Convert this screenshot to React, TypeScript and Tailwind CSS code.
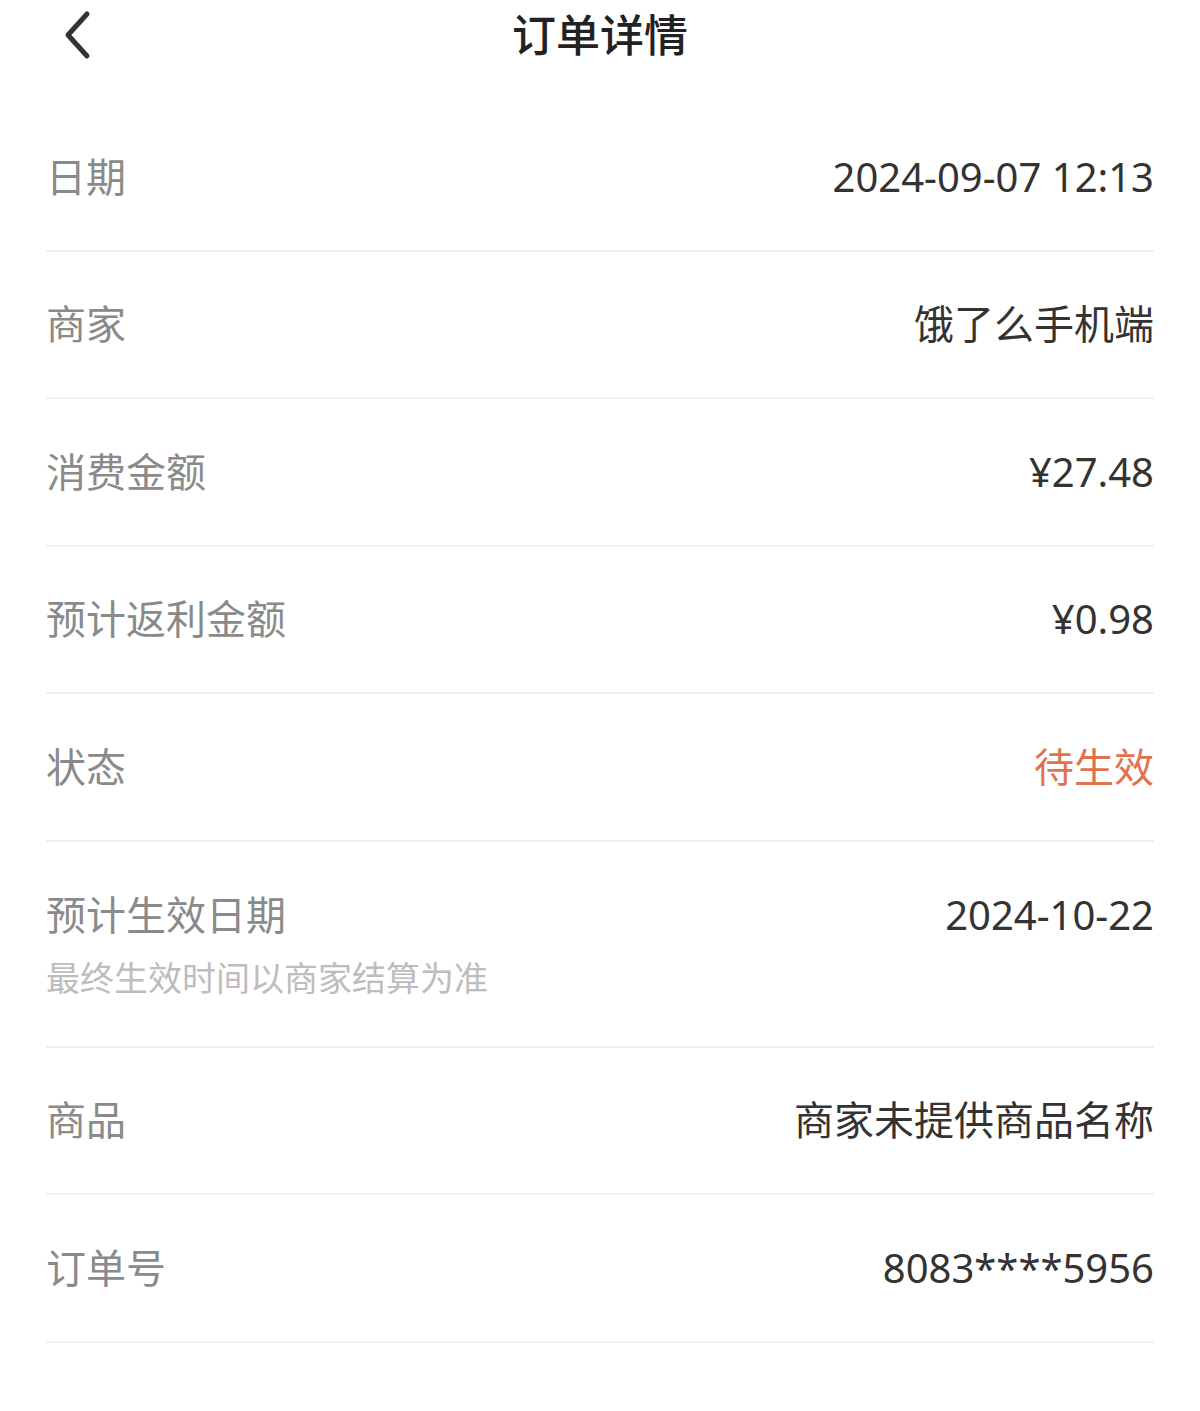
import React from "react";

type Row = {
  label: string;
  value: string;
  note?: string;
  accent?: boolean;
};

const rows: Row[] = [
  { label: "日期", value: "2024-09-07 12:13" },
  { label: "商家", value: "饿了么手机端" },
  { label: "消费金额", value: "¥27.48" },
  { label: "预计返利金额", value: "¥0.98" },
  { label: "状态", value: "待生效", accent: true },
  { label: "预计生效日期", value: "2024-10-22", note: "最终生效时间以商家结算为准" },
  { label: "商品", value: "商家未提供商品名称" },
  { label: "订单号", value: "8083****5956" },
];

function DetailRow({ row }: { row: Row }) {
  return (
    <div className="border-b-2 border-[#f0f0f0]">
      <div className={"flex items-center justify-between " + (row.note ? "h-[147px]" : "h-[145.5px]")}>
        <span className="text-[40px] leading-none text-[#8a8a8a]">{row.label}</span>
        <span
          className={
            "text-[40px] leading-none " + (row.accent ? "text-[#e0734f]" : "text-[#333333]")
          }
        >
          {row.value}
        </span>
      </div>
      {row.note ? (
        <div className="-mt-[28px] pb-[51px] text-[34px] leading-none text-[#bdbdbd]">{row.note}</div>
      ) : null}
    </div>
  );
}

export default function App() {
  return (
    <div
      className="min-h-[1411px] w-[1200px] bg-white"
      style={{ fontFamily: '"Noto Sans", "Noto Sans CJK SC", sans-serif' }}
    >
      <div className="relative flex h-[70px] items-center justify-center">
        <button className="absolute left-[60px] top-[10px]">
          <svg width="36" height="50" viewBox="0 0 36 50" fill="none">
            <path d="M27 4 L8 25 L27 46" stroke="#333333" strokeWidth="5" strokeLinecap="round" strokeLinejoin="round" />
          </svg>
        </button>
        <h1 className="text-[44px] font-medium leading-none text-[#222222]">订单详情</h1>
      </div>
      <div className="mx-[46px] pt-[34px]">
        {rows.map((row) => (
          <DetailRow key={row.label} row={row} />
        ))}
      </div>
    </div>
  );
}
